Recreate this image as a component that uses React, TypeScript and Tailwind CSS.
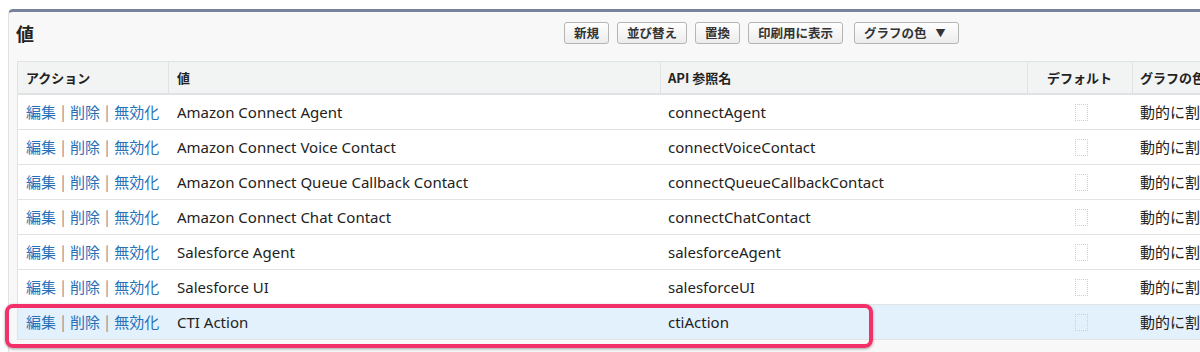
import React from "react";

const rows = [
  ["Amazon Connect Agent", "connectAgent"],
  ["Amazon Connect Voice Contact", "connectVoiceContact"],
  ["Amazon Connect Queue Callback Contact", "connectQueueCallbackContact"],
  ["Amazon Connect Chat Contact", "connectChatContact"],
  ["Salesforce Agent", "salesforceAgent"],
  ["Salesforce UI", "salesforceUI"],
  ["CTI Action", "ctiAction"],
];

const font = { fontFamily: '"Noto Sans", "Noto Sans CJK JP", sans-serif' };
const jp = { fontFamily: '"Noto Sans CJK JP", sans-serif' };

function Btn({ children }: { children: React.ReactNode }) {
  return (
    <div className="h-[22px] px-[9px] flex items-center rounded-[3px] border border-[#b5b5b5] bg-gradient-to-b from-white to-[#ececec] text-[12.5px] font-semibold text-[#333] leading-none">
      {children}
    </div>
  );
}

export default function App() {
  return (
    <div className="w-[1200px] h-[352px] overflow-hidden bg-white pt-[9px] pl-[8px] relative" style={font}>
      <div className="w-[1300px] h-[400px] border-t-[3px] border-t-[#76839b] border-l border-l-[#e2e2e2] rounded-tl-[5px] bg-[#f8f8f8]">
        <div className="h-[49px] flex items-start">
          <div className="w-[555px] pl-[7px] pt-[9px] text-[18px] font-bold text-[#222] leading-[24px]" style={jp}>値</div>
          <div className="flex items-center gap-[8px] pt-[10px]" style={jp}>
            <Btn>新規</Btn>
            <Btn>並び替え</Btn>
            <Btn>置換</Btn>
            <Btn>印刷用に表示</Btn>
            <div className="ml-[3px] h-[22px] pl-[9px] pr-[12px] gap-[9px] flex items-center rounded-[3px] border border-[#b5b5b5] bg-gradient-to-b from-white to-[#ececec] text-[12.5px] font-semibold text-[#333] leading-none">
              <span>グラフの色</span>
              <span className="text-[10px]">▼</span>
            </div>
          </div>
        </div>
        <div className="ml-[8px] w-[1300px] border-t border-l border-[#e0e3e5] bg-white">
          <div className="grid grid-cols-[151px_492px_367px_105px_185px] h-[33px] bg-[#f2f3f3] border-b-[2px] border-[#e0e3e5] text-[13px] font-bold text-[#222] items-stretch" style={jp}>
            <div className="flex items-center pl-[8px] border-r border-[#e0e3e5]">アクション</div>
            <div className="flex items-center pl-[8px] border-r border-[#e0e3e5]">値</div>
            <div className="flex items-center pl-[7px] border-r border-[#e0e3e5]">API 参照名</div>
            <div className="flex items-center justify-end pr-[20px] border-r border-[#e0e3e5]">デフォルト</div>
            <div className="flex items-center pl-[7px]">グラフの色</div>
          </div>
          {rows.map(([label, api], i) => (
            <div
              key={i}
              className={`grid grid-cols-[151px_492px_367px_105px_185px] h-[35px] border-b border-[#e3e3e3] text-[15px] text-[#222] items-center ${i === 6 ? "bg-[#e3f1fc]" : "bg-white"}`}
            >
              <div className="pl-[8px] whitespace-nowrap" style={jp}>
                <span className="text-[#2870b8]">編集</span>
                <span className="text-[#888] mx-[5px]">|</span>
                <span className="text-[#2870b8]">削除</span>
                <span className="text-[#888] mx-[5px]">|</span>
                <span className="text-[#2870b8]">無効化</span>
              </div>
              <div className="pl-[8px] whitespace-nowrap">{label}</div>
              <div className="pl-[7px] whitespace-nowrap">{api}</div>
              <div className="flex justify-center pl-[2px]">
                <div className="w-[13px] h-[17px] border border-dotted border-[#cfcfcf]" />
              </div>
              <div className="pl-[7px] whitespace-nowrap" style={jp}>動的に割り当て</div>
            </div>
          ))}
        </div>
      </div>
      <div className="absolute left-[5px] top-[304px] w-[868px] h-[44px] rounded-[8px] border-[4px] border-[#f2306a] shadow-[0_1px_3px_rgba(0,0,0,0.35)]" />
    </div>
  );
}
